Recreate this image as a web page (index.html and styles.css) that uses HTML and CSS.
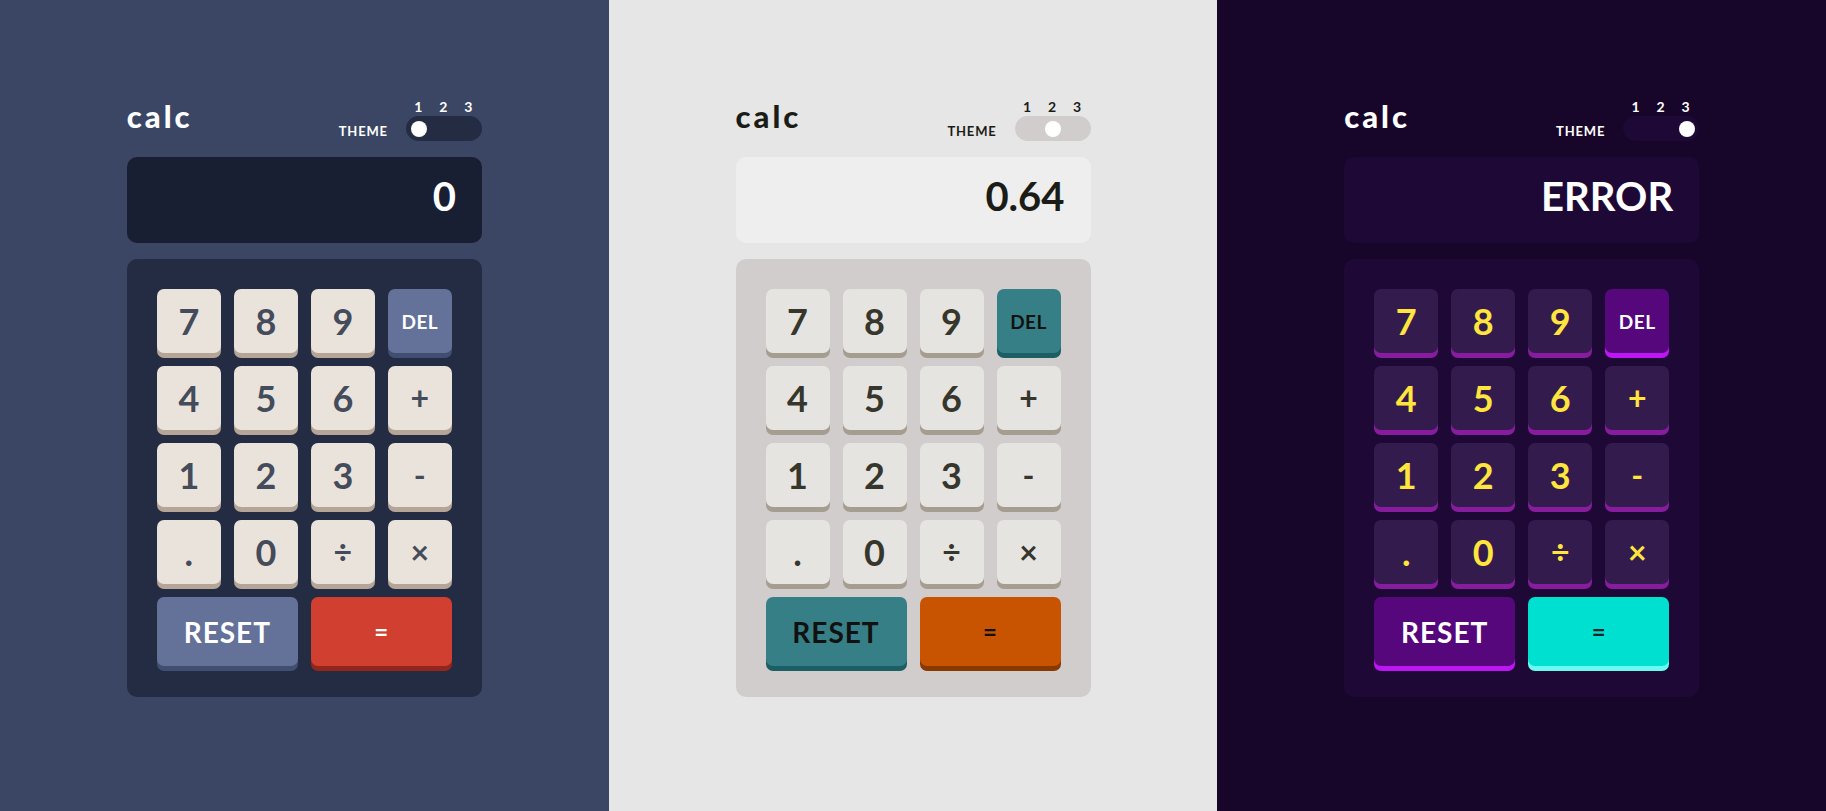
FILE: index.html
```html
<!DOCTYPE html>
<html lang="en">
<head>
<meta charset="utf-8">
<title>calc</title>
<link rel="stylesheet" href="styles.css">
</head>
<body>
<main class="stage">
  <section class="panel t1">
    <div class="calc">
      <header class="head">
        <h1 class="logo">calc</h1>
        <div class="theme">
          <span class="theme-label">THEME</span>
          <div class="switch">
            <div class="nums"><span>1</span><span>2</span><span>3</span></div>
            <div class="track pos1"><span class="knob"></span></div>
          </div>
        </div>
      </header>
      <div class="screen">0</div>
      <div class="pad">
        <button class="key">7</button><button class="key">8</button><button class="key">9</button><button class="key alt small">DEL</button>
        <button class="key">4</button><button class="key">5</button><button class="key">6</button><button class="key op">+</button>
        <button class="key">1</button><button class="key">2</button><button class="key">3</button><button class="key op">-</button>
        <button class="key">.</button><button class="key">0</button><button class="key op">÷</button><button class="key op">×</button>
        <button class="key alt wide reset">RESET</button><button class="key eq wide">=</button>
      </div>
    </div>
  </section>
  <section class="panel t2">
    <div class="calc">
      <header class="head">
        <h1 class="logo">calc</h1>
        <div class="theme">
          <span class="theme-label">THEME</span>
          <div class="switch">
            <div class="nums"><span>1</span><span>2</span><span>3</span></div>
            <div class="track pos2"><span class="knob"></span></div>
          </div>
        </div>
      </header>
      <div class="screen">0.64</div>
      <div class="pad">
        <button class="key">7</button><button class="key">8</button><button class="key">9</button><button class="key alt small">DEL</button>
        <button class="key">4</button><button class="key">5</button><button class="key">6</button><button class="key op">+</button>
        <button class="key">1</button><button class="key">2</button><button class="key">3</button><button class="key op">-</button>
        <button class="key">.</button><button class="key">0</button><button class="key op">÷</button><button class="key op">×</button>
        <button class="key alt wide reset">RESET</button><button class="key eq wide">=</button>
      </div>
    </div>
  </section>
  <section class="panel t3">
    <div class="calc">
      <header class="head">
        <h1 class="logo">calc</h1>
        <div class="theme">
          <span class="theme-label">THEME</span>
          <div class="switch">
            <div class="nums"><span>1</span><span>2</span><span>3</span></div>
            <div class="track pos3"><span class="knob"></span></div>
          </div>
        </div>
      </header>
      <div class="screen">ERROR</div>
      <div class="pad">
        <button class="key">7</button><button class="key">8</button><button class="key">9</button><button class="key alt small">DEL</button>
        <button class="key">4</button><button class="key">5</button><button class="key">6</button><button class="key op">+</button>
        <button class="key">1</button><button class="key">2</button><button class="key">3</button><button class="key op">-</button>
        <button class="key">.</button><button class="key">0</button><button class="key op">÷</button><button class="key op">×</button>
        <button class="key alt wide reset">RESET</button><button class="key eq wide">=</button>
      </div>
    </div>
  </section>
</main>
</body>
</html>
```
FILE: styles.css
```css
* { box-sizing: border-box; }
html, body { margin: 0; padding: 0; }
body {
  font-family: "Lato", "Open Sans", sans-serif;
  font-weight: 700;
  width: 1826px;
  height: 811px;
  overflow: hidden;
}
.stage {
  display: flex;
  width: 1826px;
  height: 811px;
}
.panel {
  flex: 1 1 0;
  display: flex;
  justify-content: center;
  padding-top: 100px;
}
.calc {
  width: 355px;
  display: flex;
  flex-direction: column;
}
.head {
  display: flex;
  justify-content: space-between;
  align-items: flex-start;
  height: 41px;
}
.logo {
  margin: 1px 0 0 0;
  font-size: 31px;
  line-height: 30px;
  font-weight: 900;
  letter-spacing: 3px;
}
.theme {
  display: flex;
  align-items: flex-end;
  height: 41px;
}
.theme-label {
  font-size: 13px;
  line-height: 13px;
  letter-spacing: 0.8px;
  margin-right: 18px;
  margin-bottom: 3px;
}
.switch {
  display: flex;
  flex-direction: column;
  gap: 2px;
  width: 76px;
}
.nums {
  display: grid;
  grid-template-columns: repeat(3, 1fr);
  font-size: 14px;
  line-height: 14px;
  text-align: center;
  padding-right: 1px;
}
.track {
  height: 25px;
  border-radius: 13px;
  display: flex;
  align-items: center;
  padding: 0 4px 0 5px;
}
.track.pos1 { justify-content: flex-start; }
.track.pos2 { justify-content: center; }
.track.pos3 { justify-content: flex-end; }
.knob {
  width: 16px;
  height: 16px;
  border-radius: 50%;
  background: #ffffff;
}
.screen {
  margin-top: 16px;
  height: 86px;
  border-radius: 10px;
  display: flex;
  align-items: center;
  justify-content: flex-end;
  padding: 0 26px 8px 26px;
  font-size: 40px;
  line-height: 40px;
}
.pad {
  margin-top: 16px;
  border-radius: 10px;
  padding: 30px 31px 31px 30px;
  display: grid;
  grid-template-columns: repeat(4, 64px);
  grid-template-rows: 64px 64px 64px 64px 69px;
  gap: 13px;
}
.key {
  border: none;
  margin: 0;
  padding: 0;
  border-radius: 7px;
  font-family: inherit;
  font-weight: 700;
  font-size: 36px;
  line-height: 1;
  display: flex;
  align-items: center;
  justify-content: center;
  cursor: pointer;
}
.key.op { font-size: 32px; }
.key.small { font-size: 19px; letter-spacing: 0.5px; }
.key.wide { grid-column: span 2; }
.key.reset { font-size: 28px; letter-spacing: 1px; }
.key.eq { font-size: 24px; }

/* Theme 1 */
.t1 { background: #3a4663; color: #ffffff; }
.t1 .track, .t1 .pad { background: #232c43; }
.t1 .screen { background: #181f33; color: #ffffff; }
.t1 .key { background: #eae3dc; color: #444b5a; box-shadow: 0 5px 0 #b4a597; }
.t1 .key.alt { background: #647198; color: #ffffff; box-shadow: 0 5px 0 #404e72; }
.t1 .key.eq { background: #d03f2f; color: #ffffff; box-shadow: 0 5px 0 #93261a; }

/* Theme 2 */
.t2 { background: #e6e6e6; color: #1c1c16; }
.t2 .track, .t2 .pad { background: #d2cdcd; }
.t2 .screen { background: #eeeeee; color: #1c1c16; }
.t2 .key { background: #e5e4e1; color: #36362c; box-shadow: 0 5px 0 #a69d91; }
.t2 .key.alt { background: #377f86; color: #111111; box-shadow: 0 5px 0 #1b5f65; }
.t2 .key.eq { background: #c85402; color: #111111; box-shadow: 0 5px 0 #873901; }

/* Theme 3 */
.t3 { background: #17062a; color: #ffffff; }
.t3 .track, .t3 .pad { background: #1e0936; }
.t3 .screen { background: #1e0936; color: #ffffff; }
.t3 .key { background: #331c4d; color: #ffe53d; box-shadow: 0 5px 0 #881c9e; }
.t3 .key.alt { background: #56077c; color: #ffffff; box-shadow: 0 5px 0 #be15f4; }
.t3 .key.eq { background: #00e0d1; color: #1a2327; box-shadow: 0 5px 0 #6cf9f1; }
```
